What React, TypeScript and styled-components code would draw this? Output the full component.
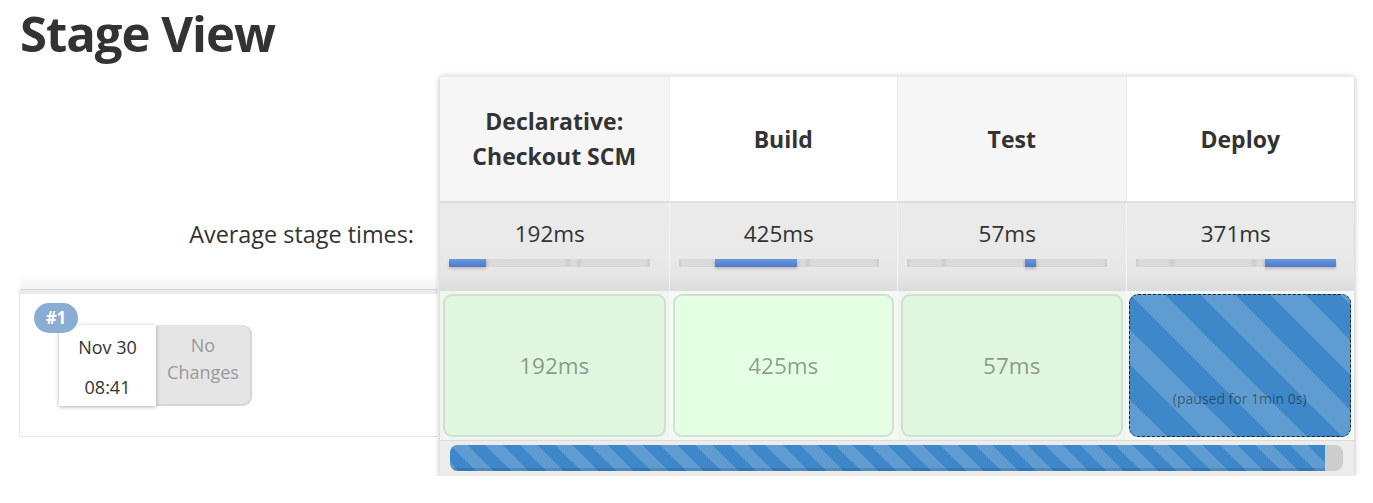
import React from "react";
import styled, { createGlobalStyle, css } from "styled-components";

const GlobalStyle = createGlobalStyle`
  html, body { margin: 0; padding: 0; background: #fff; }
  body { font-family: "Open Sans", "Noto Sans", sans-serif; color: #333; }
`;

type Stage = { name: string[]; avg: number; run: string; paused?: boolean };

const stages: Stage[] = [
  { name: ["Declarative:", "Checkout SCM"], avg: 192, run: "192ms" },
  { name: ["Build"], avg: 425, run: "425ms" },
  { name: ["Test"], avg: 57, run: "57ms" },
  { name: ["Deploy"], avg: 371, run: "(paused for 1min 0s)", paused: true },
];
const total = stages.reduce((s, x) => s + x.avg, 0);

const stripes = (size: number) => css`
  background-color: #3e88c9;
  background-image: linear-gradient(
    45deg,
    rgba(255, 255, 255, 0.17) 25%,
    transparent 25%,
    transparent 50%,
    rgba(255, 255, 255, 0.17) 50%,
    rgba(255, 255, 255, 0.17) 75%,
    transparent 75%,
    transparent
  );
  background-size: ${size}px ${size}px;
`;

const Page = styled.div`
  padding: 0 0 0 20px;
`;

const Title = styled.h1`
  margin: 9px 0 18px 0;
  font-size: 49px;
  line-height: 49px;
  letter-spacing: -1px;
  font-weight: 700;
  color: #333;
`;

const Table = styled.div`
  display: flex;
  align-items: flex-start;
`;

const LeftCol = styled.div`
  width: 418px;
  margin-right: 2px;
  display: flex;
  flex-direction: column;
`;

const LeftHeader = styled.div`
  height: 125px;
`;

const LeftAvg = styled.div`
  height: 89px;
  box-sizing: border-box;
  padding: 16px 24px 0 0;
  text-align: right;
  font-size: 23.4px;
  line-height: 34px;
  background: linear-gradient(#fff 0, #fff 82%, #f3f3f3 100%);
  border-bottom: 1px solid #d6d6d6;
`;

const LeftBuild = styled.div`
  height: 147px;
  box-sizing: border-box;
  border-left: 1px solid #e6e6e6;
  border-bottom: 1px solid #e6e6e6;
  border-top: 4px solid #ececec;
  margin-left: -1px;
  padding: 31px 0 0 39px;
`;

const BuildInfo = styled.div`
  position: relative;
  display: flex;
  width: max-content;
`;

const Badge = styled.div`
  position: absolute;
  left: -25px;
  top: -22px;
  width: 44px;
  height: 30px;
  border-radius: 15px;
  background: #8aadd4;
  color: #fff;
  font-weight: 700;
  font-size: 17px;
  line-height: 30px;
  text-align: center;
  z-index: 2;
`;

const DateCard = styled.div`
  width: 97px;
  height: 81px;
  box-sizing: border-box;
  padding-top: 2px;
  background: #fff;
  box-shadow: 0 1px 4px rgba(0, 0, 0, 0.3);
  text-align: center;
  font-size: 18px;
  line-height: 40px;
  color: #333;
  z-index: 1;
`;

const ChangesBox = styled.div`
  width: 96px;
  height: 81px;
  box-sizing: border-box;
  padding-top: 7px;
  background: #e5e5e5;
  border-radius: 0 9px 9px 0;
  border-right: 2px solid #d6d6d6;
  border-bottom: 2px solid #d6d6d6;
  text-align: center;
  font-size: 18px;
  line-height: 27px;
  color: #9a9a9a;
`;

const Panel = styled.div`
  width: 914px;
  box-shadow: 0 1px 6px rgba(0, 0, 0, 0.28);
  background: #fff;
`;

const Row = styled.div`
  display: grid;
  grid-template-columns: repeat(4, 1fr);
`;

const HeadCell = styled.div<{ $odd: boolean }>`
  height: 125px;
  box-sizing: border-box;
  display: flex;
  flex-direction: column;
  align-items: center;
  justify-content: center;
  background: ${(p) => (p.$odd ? "#f6f6f6" : "#fff")};
  border-left: 1px solid #ececec;
  border-top: 1px solid #eaeaea;
  font-weight: 700;
  font-size: 23px;
  line-height: 35px;
  color: #333;
  text-align: center;
  &:first-child { border-left: none; }
`;

const AvgCell = styled.div`
  height: 90px;
  box-sizing: border-box;
  border-top: 2px solid #dedede;
  border-left: 1px solid #f4f4f4;
  background: linear-gradient(#eaeaea 0, #e9e9e9 60%, #e6e6e6 80%, #dcdcdc 100%);
  padding: 14px 18px 0 9px;
  text-align: center;
  font-size: 22.5px;
  line-height: 34px;
  color: #333;
  &:first-child { border-left: none; }
`;

const Track = styled.div`
  display: flex;
  height: 8px;
  margin-top: 8px;
`;

const Seg = styled.div<{ $active: boolean }>`
  height: 100%;
  ${(p) =>
    p.$active
      ? css`
          background: linear-gradient(#6c97db, #4b7bcc);
          box-shadow: 0 2px 3px rgba(0, 0, 0, 0.18);
          position: relative;
        `
      : css`
          background: linear-gradient(
            to right,
            #cdcdcd,
            #dadada 4px,
            #dadada calc(100% - 4px),
            #cdcdcd
          );
        `}
`;

const BuildRow = styled(Row)`
  height: 149px;
`;

const BuildCol = styled.div<{ $odd: boolean; $last?: boolean }>`
  box-sizing: border-box;
  padding: ${(p) => (p.$last ? "3px 3px 3px 2px" : "3px")};
  background: ${(p) => (p.$odd ? "#eff6ef" : "#f3faf3")};
  border-left: 1px solid #f8f8f8;
  display: flex;
  &:first-child { border-left: none; }
`;

const SuccessCell = styled.div<{ $odd: boolean }>`
  flex: 1;
  border-radius: 9px;
  border: 2px solid #d1e0d0;
  background: ${(p) => (p.$odd ? "#dff7de" : "#e5ffe4")};
  display: flex;
  align-items: center;
  justify-content: center;
  font-size: 22.5px;
  color: rgba(0, 0, 0, 0.4);
`;

const PausedCell = styled.div`
  flex: 1;
  border-radius: 9px;
  border: 1px dashed #222;
  ${stripes(70)}
  display: flex;
  align-items: flex-end;
  justify-content: center;
  padding-bottom: 27px;
  font-size: 14px;
  line-height: 20px;
  color: rgba(0, 0, 0, 0.45);
`;

const BarRow = styled.div`
  height: 36px;
  box-sizing: border-box;
  border-top: 1px solid #dcdcdc;
  background: #ececec;
  padding: 4px 11px 5px 10px;
`;

const BarTrack = styled.div`
  height: 100%;
  border-radius: 8px;
  overflow: hidden;
  display: flex;
  background: linear-gradient(to right, #a9a9a9, #c6c6c6 60%, #cdcdcd);
`;

const BarFill = styled.div`
  height: 100%;
  ${stripes(35)}
  box-shadow: inset 0 -3px 0 rgba(0, 0, 0, 0.12);
`;

export default function App() {
  return (
    <Page>
      <GlobalStyle />
      <Title>Stage View</Title>
      <Table>
        <LeftCol>
          <LeftHeader />
          <LeftAvg>Average stage times:</LeftAvg>
          <LeftBuild>
            <BuildInfo>
              <Badge>#1</Badge>
              <DateCard>
                <div>Nov 30</div>
                <div>08:41</div>
              </DateCard>
              <ChangesBox>
                No
                <br />
                Changes
              </ChangesBox>
            </BuildInfo>
          </LeftBuild>
        </LeftCol>
        <Panel>
          <Row>
            {stages.map((s, i) => (
              <HeadCell key={i} $odd={i % 2 === 0}>
                {s.name.map((l) => (
                  <div key={l}>{l}</div>
                ))}
              </HeadCell>
            ))}
          </Row>
          <Row>
            {stages.map((s, i) => (
              <AvgCell key={i}>
                {s.avg}ms
                <Track>
                  {stages.map((t, j) => (
                    <Seg
                      key={j}
                      $active={i === j}
                      style={{ width: `${(t.avg / total) * 100}%` }}
                    />
                  ))}
                </Track>
              </AvgCell>
            ))}
          </Row>
          <BuildRow>
            {stages.map((s, i) => (
              <BuildCol key={i} $odd={i % 2 === 0} $last={i === stages.length - 1}>
                {s.paused ? (
                  <PausedCell>{s.run}</PausedCell>
                ) : (
                  <SuccessCell $odd={i % 2 === 0}>{s.run}</SuccessCell>
                )}
              </BuildCol>
            ))}
          </BuildRow>
          <BarRow>
            <BarTrack>
              <BarFill style={{ width: "98%" }} />
            </BarTrack>
          </BarRow>
        </Panel>
      </Table>
    </Page>
  );
}
